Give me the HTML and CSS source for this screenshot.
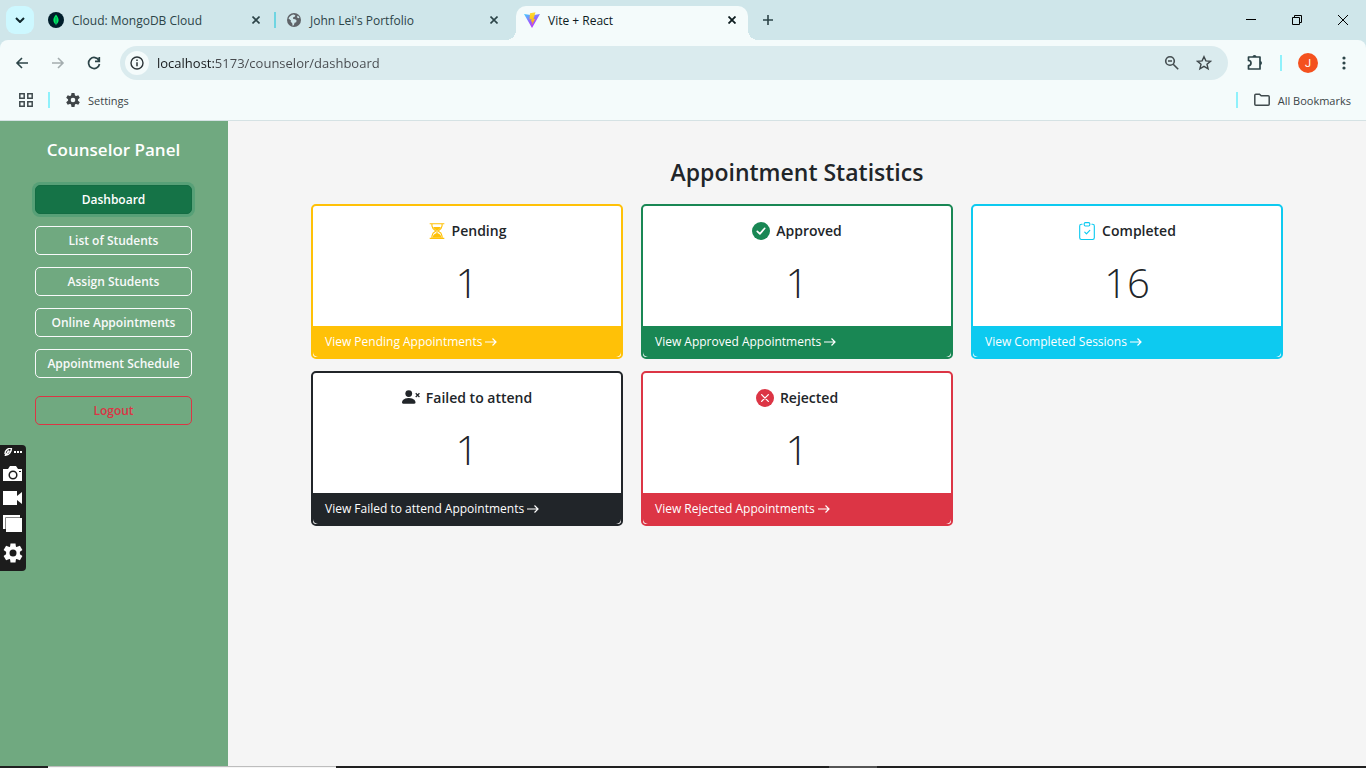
FILE: index.html
```html
<!DOCTYPE html>
<html lang="en">
<head>
<meta charset="utf-8">
<title>Vite + React</title>
<link rel="stylesheet" href="styles.css">
</head>
<body>
<header class="browser">
  <div class="tabstrip">
    <button class="tab-search" aria-label="Search tabs"><svg width="10" height="6" viewBox="0 0 10 6"><path d="M1 1l4 4 4-4" fill="none" stroke="#10282c" stroke-width="2"/></svg></button>
    <div class="tab">
      <svg width="16" height="16" viewBox="0 0 16 16"><circle cx="8" cy="8" r="8" fill="#001e2b"/><path d="M8 2.500C6 5 5.400 6.600 5.400 8.300c0 2 1.200 3.300 2.400 4.200L8 13.800l.200-1.300c1.200-.900 2.400-2.200 2.400-4.200C10.600 6.600 10 5 8 2.500z" fill="#00ed64"/><path d="M8 5v8" stroke="#00684a" stroke-width=".7"/></svg>
      <span class="tab-title">Cloud: MongoDB Cloud</span>
      <button class="close" aria-label="Close tab"><svg width="8" height="8" viewBox="0 0 8 8"><path d="M.5.5l7 7m0-7l-7 7" stroke="currentColor" stroke-width="1.600"/></svg></button>
    </div>
    <span class="tab-divider"></span>
    <div class="tab">
      <svg width="16" height="16" viewBox="0 0 16 16"><circle cx="8" cy="8" r="7" fill="#5f6368"/><path d="M2.500 6.500C3.500 4.500 5 3.200 7.500 2.600l1.800.6-.3 1.400-2 .9.200 1.500 2 .3 1.400 1.300-.4 1.600-1.600.5-.7 2.400-1.200.9-.5-2.700-1.500-1.600.3-1.200-1.500-1.300zM10.800 5l1.200-1.400 1.500 2.200-1.300.5z" fill="#cfe6ea"/></svg>
      <span class="tab-title">John Lei's Portfolio</span>
      <button class="close" aria-label="Close tab"><svg width="8" height="8" viewBox="0 0 8 8"><path d="M.5.5l7 7m0-7l-7 7" stroke="currentColor" stroke-width="1.600"/></svg></button>
    </div>
    <div class="tab tab-active">
      <svg width="16" height="16" viewBox="0 0 16 16"><defs><linearGradient id="vite" x1="0" y1="0" x2=".6" y2="1"><stop offset="0" stop-color="#41d1ff"/><stop offset=".6" stop-color="#9a5cff"/><stop offset="1" stop-color="#bd34fe"/></linearGradient><linearGradient id="bolt" x1="0" y1="0" x2="0" y2="1"><stop offset="0" stop-color="#ffdd35"/><stop offset="1" stop-color="#ffa800"/></linearGradient></defs><path d="M0 2l8 14L16 2 8.500 3.300z" fill="url(#vite)"/><path d="M11.500.3L6 1.200l-.5 6.300 2-.4-.5 2.700 1.500-.4-.9 4.200 3.700-6.800-1.900.4 1-3.200z" fill="url(#bolt)"/></svg>
      <span class="tab-title">Vite + React</span>
      <button class="close" aria-label="Close tab"><svg width="8" height="8" viewBox="0 0 8 8"><path d="M.5.5l7 7m0-7l-7 7" stroke="currentColor" stroke-width="1.800"/></svg></button>
    </div>
    <button class="new-tab" aria-label="New tab"><svg width="10" height="10" viewBox="0 0 10 10"><path d="M5 0v10M0 5h10" stroke="currentColor" stroke-width="1.600"/></svg></button>
    <div class="window-controls">
      <button aria-label="Minimize"><svg width="10" height="10" viewBox="0 0 10 10"><path d="M0 4.500h10" stroke="#000"/></svg></button>
      <button aria-label="Restore"><svg width="10" height="10" viewBox="0 0 10 10" fill="none" stroke="#000"><path d="M.5 2.500h7v7h-7zM2.500 2.500v-2h7v7h-2"/></svg></button>
      <button aria-label="Close window"><svg width="10" height="10" viewBox="0 0 10 10"><path d="M0 0l10 10M10 0L0 10" stroke="#000"/></svg></button>
    </div>
  </div>
  <div class="panel">
    <div class="toolbar">
      <button class="tool" aria-label="Back"><svg width="14" height="14" viewBox="0 0 14 14" fill="none" stroke="#2c4448" stroke-width="1.600"><path d="M13 7H2M7 2L2 7l5 5"/></svg></button>
      <button class="tool" aria-label="Forward"><svg width="14" height="14" viewBox="0 0 14 14" fill="none" stroke="#a4adaf" stroke-width="1.600"><path d="M1 7h11M7 2l5 5-5 5"/></svg></button>
      <button class="tool" aria-label="Reload"><svg width="14" height="14" viewBox="0 0 14 14" fill="none" stroke="#2c4448" stroke-width="1.700"><path d="M12 4.500A5.500 5.500 0 1 0 12.500 8M12.300 1v4.400H8"/></svg></button>
      <div class="omnibox">
        <button class="site-info" aria-label="Site information"><svg width="14" height="14" viewBox="0 0 14 14"><circle cx="7" cy="7" r="6" fill="none" stroke="#2b3437" stroke-width="1.400"/><path d="M7 6.200v4M7 3.600v1.500" stroke="#2b3437" stroke-width="1.500"/></svg></button>
        <input class="address" type="text" aria-label="Address" value="localhost:5173/counselor/dashboard">
        <button class="omni-action" aria-label="Zoom"><svg width="16" height="16" viewBox="0 0 16 16" fill="none" stroke="#444d50" stroke-width="1.600"><circle cx="6" cy="6" r="4.300"/><path d="M9.200 9.200l5 5M4 6h4"/></svg></button>
        <button class="omni-action" aria-label="Bookmark this tab"><svg width="16" height="16" viewBox="0 0 16 16"><path d="M8 1.700l1.900 4.200 4.600.4-3.500 3 1.100 4.500L8 11.400l-4.100 2.400L5 9.300l-3.500-3 4.600-.4z" fill="none" stroke="#3e474a" stroke-width="1.400"/></svg></button>
      </div>
      <button class="tool extensions" aria-label="Extensions"><svg width="18" height="18" viewBox="0 0 18 18"><path d="M2.500 3H14v12H2.500v-3.500a2.500 2.500 0 0 0 0-5z" fill="none" stroke="#2c4448" stroke-width="1.700" stroke-linejoin="round"/><path d="M6.500 3a2 2 0 0 1 4 0zM14 7a2 2 0 0 1 0 4z" fill="#2c4448"/></svg></button>
      <span class="divider"></span>
      <button class="avatar" aria-label="Profile">J</button>
      <button class="tool menu" aria-label="Menu"><svg width="4" height="14" viewBox="0 0 4 14" fill="#2c4448"><circle cx="2" cy="2" r="1.600"/><circle cx="2" cy="7" r="1.600"/><circle cx="2" cy="12" r="1.600"/></svg></button>
    </div>
    <div class="bookmarks">
      <button class="apps" aria-label="Apps"><svg width="14" height="14" viewBox="0 0 14 14" fill="none" stroke="#3f4a4d" stroke-width="1.500"><path d="M.8.8h4.400v4.400H.8zM8.800.8h4.400v4.400H8.800zM.8 8.800h4.400v4.400H.8zM8.800 8.800h4.400v4.400H8.800z"/></svg></button>
      <span class="divider"></span>
      <a class="bookmark" href="#settings"><svg width="14" height="14" viewBox="0 0 14 14"><g fill="#3f4548"><circle cx="7" cy="7" r="5"/><path d="M5.500 0h3l.5 3H5zM5.500 14h3l.5-3H5zM.2 4.800l1.500-2.600 2.800 1.100-2 3.500zM13.800 9.200l-1.500 2.600-2.800-1.100 2-3.500zM13.800 4.800l-1.500-2.600-2.800 1.100 2 3.500zM.2 9.200l1.500 2.600 2.800-1.100-2-3.500z"/></g><circle cx="7" cy="7" r="2.300" fill="#f4fbfb"/></svg>Settings</a>
      <span class="divider divider-end"></span>
      <a class="bookmark" href="#bookmarks"><svg width="16" height="14" viewBox="0 0 16 14"><path d="M.8 2.200q0-1 1-1h3.700l1.700 1.600h7q1 0 1 1v7.400q0 1-1 1H1.800q-1 0-1-1z" fill="none" stroke="#3f4a4d" stroke-width="1.500"/></svg>All Bookmarks</a>
    </div>
  </div>
</header>

<div class="app">
  <nav class="sidebar">
    <h1 class="sidebar-title">Counselor Panel</h1>
    <button class="nav-button nav-current">Dashboard</button>
    <button class="nav-button">List of Students</button>
    <button class="nav-button">Assign Students</button>
    <button class="nav-button">Online Appointments</button>
    <button class="nav-button">Appointment Schedule</button>
    <button class="nav-button nav-logout">Logout</button>
  </nav>
  <main class="content">
    <h2 class="content-title">Appointment Statistics</h2>
    <div class="cards">
      <section class="card pending">
        <div class="card-body">
          <h3 class="card-title"><svg class="icon" width="18" height="18" viewBox="0 0 16 16" fill="none" stroke="currentColor"><path d="M1.500 1.500h13M1.500 14.500h13M3.500 2v1.500Q4 6.500 6.500 7.500v1Q4 9.500 3.500 12.500V14M12.500 2v1.500Q12 6.500 9.500 7.500v1q2.500 1 3 4V14"/><path d="M4.500 4.500h7Q10.500 6.500 8.500 7.500v2.500q3 .5 3.500 4H4q.5-3.500 3.500-4V7.500Q5.500 6.500 4.500 4.500z" fill="currentColor" stroke="none"/></svg>Pending</h3>
          <p class="count">1</p>
        </div>
        <a class="card-link" href="#pending">View Pending Appointments <svg class="arrow" width="12" height="10" viewBox="0 0 12 10"><path d="M0 5h11M7.500 1.500L11 5 7.500 8.500" fill="none" stroke="currentColor" stroke-width="1.200"/></svg></a>
      </section>
      <section class="card approved">
        <div class="card-body">
          <h3 class="card-title"><svg class="icon" width="18" height="18" viewBox="0 0 16 16"><circle cx="8" cy="8" r="8" fill="currentColor"/><path d="M4.700 8.300l2.300 2.300 4.300-5" fill="none" stroke="#fff" stroke-width="1.500" stroke-linecap="round" stroke-linejoin="round"/></svg>Approved</h3>
          <p class="count">1</p>
        </div>
        <a class="card-link" href="#approved">View Approved Appointments <svg class="arrow" width="12" height="10" viewBox="0 0 12 10"><path d="M0 5h11M7.500 1.500L11 5 7.500 8.500" fill="none" stroke="currentColor" stroke-width="1.200"/></svg></a>
      </section>
      <section class="card completed">
        <div class="card-body">
          <h3 class="card-title"><svg class="icon" width="18" height="18" viewBox="0 0 16 16" fill="currentColor"><path fill-rule="evenodd" d="M10.854 7.146a.5.5 0 0 1 0 .708l-3 3a.5.5 0 0 1-.708 0l-1.500-1.500a.5.5 0 1 1 .708-.708L7.500 9.793l2.646-2.647a.5.5 0 0 1 .708 0"/><path d="M4 1.500H3a2 2 0 0 0-2 2V14a2 2 0 0 0 2 2h10a2 2 0 0 0 2-2V3.500a2 2 0 0 0-2-2h-1v1h1a1 1 0 0 1 1 1V14a1 1 0 0 1-1 1H3a1 1 0 0 1-1-1V3.500a1 1 0 0 1 1-1h1z"/><path d="M9.500 1a.5.5 0 0 1 .5.5v1a.5.5 0 0 1-.5.5h-3a.5.5 0 0 1-.5-.5v-1a.5.5 0 0 1 .5-.5zm-3-1A1.500 1.500 0 0 0 5 1.500v1A1.500 1.500 0 0 0 6.500 4h3A1.500 1.500 0 0 0 11 2.500v-1A1.500 1.500 0 0 0 9.500 0z"/></svg>Completed</h3>
          <p class="count">16</p>
        </div>
        <a class="card-link" href="#completed">View Completed Sessions <svg class="arrow" width="12" height="10" viewBox="0 0 12 10"><path d="M0 5h11M7.500 1.500L11 5 7.500 8.500" fill="none" stroke="currentColor" stroke-width="1.200"/></svg></a>
      </section>
      <section class="card failed">
        <div class="card-body">
          <h3 class="card-title"><svg class="icon" width="18" height="18" viewBox="0 0 16 16" fill="currentColor"><circle cx="6" cy="4" r="3"/><path d="M1 13s-1 0-1-1 1-4 6-4 6 3 6 4-1 1-1 1z"/><path d="M12.200 3.800l3.300 3.300m0-3.300l-3.300 3.300" stroke="currentColor" stroke-width="1.100"/></svg>Failed to attend</h3>
          <p class="count">1</p>
        </div>
        <a class="card-link" href="#failed">View Failed to attend Appointments <svg class="arrow" width="12" height="10" viewBox="0 0 12 10"><path d="M0 5h11M7.500 1.500L11 5 7.500 8.500" fill="none" stroke="currentColor" stroke-width="1.200"/></svg></a>
      </section>
      <section class="card rejected">
        <div class="card-body">
          <h3 class="card-title"><svg class="icon" width="18" height="18" viewBox="0 0 16 16"><circle cx="8" cy="8" r="8" fill="currentColor"/><path d="M5 5l6 6m0-6l-6 6" stroke="#fff" stroke-width="1.100" stroke-linecap="round"/></svg>Rejected</h3>
          <p class="count">1</p>
        </div>
        <a class="card-link" href="#rejected">View Rejected Appointments <svg class="arrow" width="12" height="10" viewBox="0 0 12 10"><path d="M0 5h11M7.500 1.500L11 5 7.500 8.500" fill="none" stroke="currentColor" stroke-width="1.200"/></svg></a>
      </section>
    </div>
  </main>
</div>

<footer class="taskbar"><span class="task-search"></span><span class="task-app"></span></footer>

<aside class="recorder" aria-label="Screen recorder">
  <svg width="20" height="8" viewBox="0 1 20 8"><path d="M2 6.500C2 3.500 5 1 8.500 1 8.500 4.500 6 8 3.500 8zM2 9l3-4" fill="none" stroke="#fff" stroke-width="1.400"/><circle cx="5.500" cy="4.500" r="1.200" fill="#fff"/><path d="M11 4h2v2h-2zM14 4h2v2h-2zM17 4h2v2h-2z" fill="#fff"/></svg>
  <button aria-label="Take screenshot"><svg width="20" height="15" viewBox="0 0 20 15"><path d="M0 3h5l2-3h6l2 3h4v12H0z" fill="#fff"/><circle cx="10" cy="9" r="3.800" fill="none" stroke="#1c1c1c" stroke-width="1.500"/><path d="M16 5h2v1h-2z" fill="#1c1c1c"/></svg></button>
  <button aria-label="Record video"><svg width="20" height="14" viewBox="0 0 20 14"><path d="M0 0h14v5l5-4v12l-5-4v5H0z" fill="#fff"/></svg></button>
  <button aria-label="Gallery"><svg width="20" height="18" viewBox="0 0 20 18"><path d="M0 0h17v3H3v11H0z" fill="#fff"/><path d="M2.500 14V2.500H17" fill="none" stroke="#888"/><path d="M3 3h16v14H3z" fill="#fff"/></svg></button>
  <button aria-label="Recorder settings"><svg width="20" height="20" viewBox="0 0 20 20"><g fill="#fff"><circle cx="10" cy="10" r="7"/><path d="M7.500 0.500h5l.5 4H7zM7.500 19.500h5l.5-4H7zM.6 7L3.100 2.700l4 1.600-3 5.200zM19.400 13l-2.500 4.300-4-1.600 3-5.200zM19.400 7l-2.500-4.300-4 1.600 3 5.200zM.6 13l2.500 4.300 4-1.600-3-5.200z"/></g><circle cx="10" cy="10" r="3.500" fill="#1c1c1c"/></svg></button>
</aside>
</body>
</html>
```
FILE: styles.css
```css
* { box-sizing: border-box; }

body {
  margin: 0;
  min-height: 100vh;
  display: flex;
  flex-direction: column;
  font-family: "Open Sans", "Noto Sans", sans-serif;
  font-size: 12px;
  color: #212529;
  background: #f5f5f5;
}

svg { display: block; flex: none; }
h1, h2, h3, p { margin: 0; }
a { color: inherit; text-decoration: none; }

button {
  font: inherit;
  color: inherit;
  padding: 0;
  border: 0;
  background: none;
  display: flex;
  align-items: center;
  justify-content: center;
}

/* Browser chrome */
.browser { background: #cfe6ea; }

.tabstrip {
  display: flex;
  align-items: flex-end;
  height: 40px;
  padding-left: 6px;
}

.tab-search {
  width: 28px;
  height: 28px;
  margin: 0 6px 6px 0;
  border-radius: 9px;
  background: #cdf8ff;
}

.tab {
  position: relative;
  display: flex;
  align-items: center;
  gap: 8px;
  width: 232px;
  height: 34px;
  padding: 0 8px 6px;
  color: #2c4448;
}

.tab-title { flex: 1; }
.close { width: 16px; height: 16px; }

.tab-divider {
  width: 2px;
  height: 16px;
  margin: 0 2px 12px;
  background: #6fd5e2;
}

.tab-active {
  margin-left: 6px;
  border-radius: 10px 10px 0 0;
  background: #f4fbfb;
  color: #0d1c1f;
}

.tab-active::before,
.tab-active::after {
  content: "";
  position: absolute;
  bottom: 0;
  width: 10px;
  height: 10px;
}

.tab-active::before {
  left: -10px;
  background: radial-gradient(circle at 0 0, #cfe6ea 10px, #f4fbfb 10px);
}

.tab-active::after {
  right: -10px;
  background: radial-gradient(circle at 100% 0, #cfe6ea 10px, #f4fbfb 10px);
}

.new-tab {
  width: 28px;
  height: 28px;
  margin: 0 0 6px 6px;
  color: #2c4448;
}

.window-controls {
  display: flex;
  align-self: stretch;
  margin-left: auto;
}

.window-controls button { width: 46px; }

.panel {
  border-bottom: 1px solid #d5e2e4;
  border-radius: 8px 8px 0 0;
  background: #f4fbfb;
}

.toolbar {
  display: flex;
  align-items: center;
  height: 46px;
  padding: 0 8px 0 4px;
}

.tool { width: 36px; height: 34px; }

.omnibox {
  flex: 1;
  display: flex;
  align-items: center;
  height: 34px;
  margin-left: 8px;
  padding: 0 8px 0 5px;
  border-radius: 17px;
  background: #daebee;
}

.site-info {
  width: 24px;
  height: 24px;
  border-radius: 50%;
  background: #f4fbfb;
}

.address {
  flex: 1;
  min-width: 0;
  padding: 0 8px;
  border: 0;
  outline: 0;
  font: inherit;
  font-size: 13px;
  color: transparent;
  background: linear-gradient(to right, #16191b 66px, #46494d 66px);
  background-clip: text;
  -webkit-background-clip: text;
}

.omni-action { width: 32px; height: 28px; }
.extensions { margin-left: 9px; }

.divider {
  width: 2px;
  height: 16px;
  background: #8ff1fb;
}

.toolbar .divider { margin: 0 16px 0 7px; }

.avatar {
  width: 20px;
  height: 20px;
  border-radius: 50%;
  background: #f4511e;
  color: #fff;
  font-family: Roboto, sans-serif;
  font-size: 11px;
}

.menu { width: 28px; margin-left: 12px; }

.bookmarks {
  display: flex;
  align-items: center;
  height: 34px;
  padding: 0 15px 6px 19px;
  font-size: 11px;
  color: #3b4447;
}

.bookmarks .divider { margin: 0 16px 0 15px; }
.bookmarks .divider-end { margin-left: auto; }
.bookmark { display: flex; align-items: center; gap: 8px; }

/* Counselor application */
.app { flex: 1; display: flex; }

.sidebar {
  display: flex;
  flex-direction: column;
  gap: 12px;
  width: 228px;
  padding: 17px 36px 16px 35px;
  background: #70a980;
}

.sidebar-title {
  margin-bottom: 11px;
  font-size: 17px;
  font-weight: 600;
  line-height: 24px;
  text-align: center;
  white-space: nowrap;
  color: #fff;
}

.nav-button {
  height: 29px;
  border: 1px solid #f8f9fa;
  border-radius: 5px;
  font-size: 12px;
  font-weight: 600;
  white-space: nowrap;
  color: #f8f9fa;
}

.nav-current {
  border-color: #146c43;
  background: #157347;
  color: #fff;
  box-shadow: 0 0 0 3px #57a077;
}

.nav-logout {
  margin-top: 6px;
  border-color: #dc3545;
  color: #dc3545;
}

.content {
  flex: 1;
  display: flex;
  flex-direction: column;
  align-items: center;
  padding: 36px 24px;
}

.content-title {
  margin-bottom: 16px;
  font-size: 23px;
  font-weight: 600;
  line-height: 31px;
}

.cards {
  display: grid;
  grid-template-columns: repeat(3, 1fr);
  gap: 12px 18px;
  width: 100%;
  max-width: 972px;
}

.card {
  overflow: hidden;
  border: 2px solid var(--tone);
  border-radius: 5px;
  background: #fff;
}

.card-body {
  display: flex;
  flex-direction: column;
  align-items: center;
  padding: 13px 12px 17px;
}

.card-title {
  display: flex;
  align-items: center;
  gap: 6px;
  margin-bottom: 14px;
  font-size: 14px;
  font-weight: 600;
  line-height: 24px;
}

.icon { color: var(--tone); }

.count {
  font-size: 40px;
  font-weight: 300;
  line-height: 52px;
}

.card-link {
  display: flex;
  align-items: center;
  gap: 3px;
  height: 31px;
  padding: 0 12px;
  border-radius: 0 0 5px 5px;
  background: var(--tone);
  color: #fff;
  font-size: 12px;
}

.pending { --tone: #ffc107; }
.approved { --tone: #198754; }
.completed { --tone: #0dcaf0; }
.failed { --tone: #212529; }
.rejected { --tone: #dc3545; }

/* Desktop edge */
.taskbar {
  display: flex;
  justify-content: space-between;
  height: 2px;
  padding: 0 489px 0 48px;
  background: #202020;
}

.task-search {
  width: 288px;
  border-top: 1px solid #bdbdbd;
  background: #f5f5f5;
}

.task-app { width: 48px; background: #555; }

.recorder {
  position: absolute;
  left: 0;
  top: 445px;
  display: flex;
  flex-direction: column;
  align-items: center;
  gap: 10px;
  width: 26px;
  height: 126px;
  padding: 3px 3px 7px;
  border-radius: 0 4px 4px 0;
  background: #1c1c1c;
}
```
